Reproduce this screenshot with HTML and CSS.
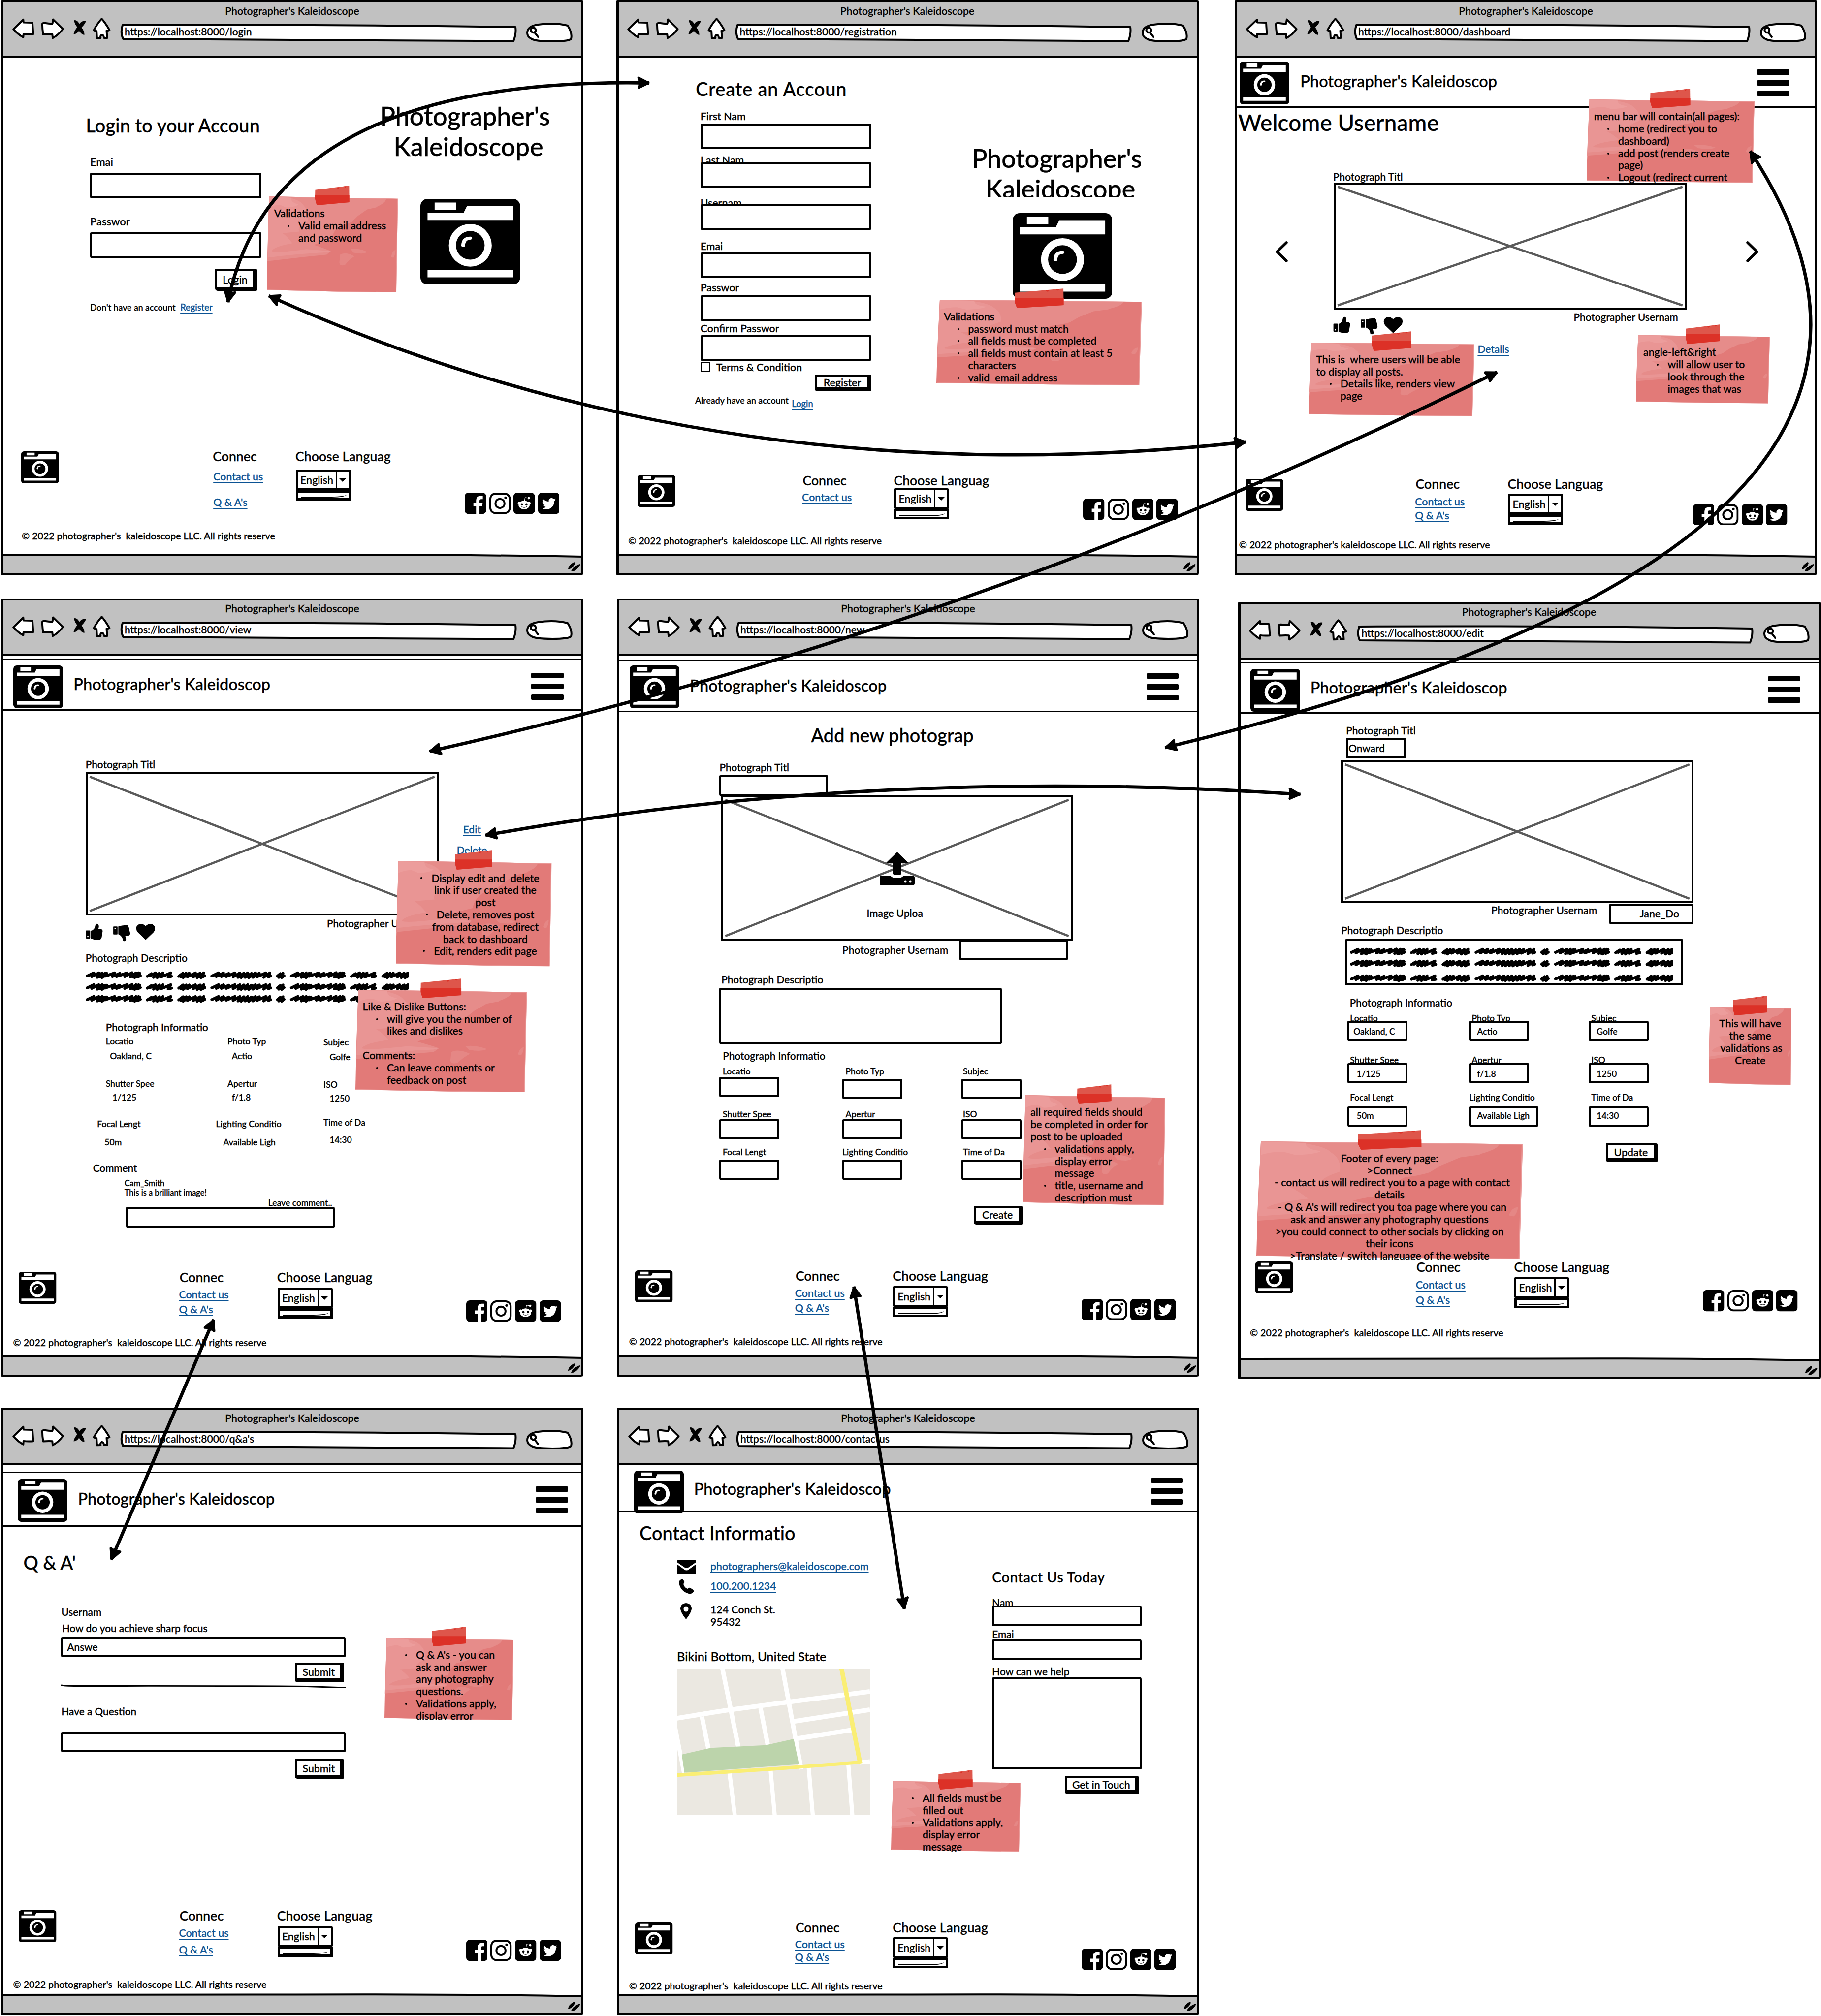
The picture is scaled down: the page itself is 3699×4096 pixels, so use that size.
FILE: index.html
```html
<!DOCTYPE html>
<html lang="en">
<head>
<meta charset="utf-8">
<title>Photographer's Kaleidoscope – wireframes</title>
<link rel="stylesheet" href="styles.css">
</head>
<body>
<svg class="defs" aria-hidden="true">
  <symbol id="nav-icons" viewBox="90 130 760 180">
    <g fill="#fff" stroke="#000" stroke-width="15" stroke-linejoin="round">
      <path d="M102 226L178 152L180 174L246 175Q250 178 250 200L254 263Q215 266 180 262L178 288Q140 268 102 226z"/>
      <path d="M324 184Q325 179 340 178Q380 184 402 183L407 151L482 224Q450 268 404 294L401 263Q360 262 330 264Q324 225 324 184z"/>
      <path d="M780 146Q805 172 840 232Q832 236 818 237L822 293H798Q796 268 780 270Q768 275 772 293L744 294L741 240Q728 238 720 233Q745 185 780 146z"/>
    </g>
    <path d="M569 157Q590 152 609 184Q630 158 658 163Q660 178 626 212Q650 245 648 269Q630 272 606 238Q588 264 565 264Q564 246 592 210Q568 180 569 157z"/>
  </symbol>
  <symbol id="url-bar" viewBox="0 0 808 38">
    <path d="M6 3Q400 1 804 7Q806 20 800 35.5Q400 33 7 31Q1 18 6 3z" fill="#fff" stroke="#000" stroke-width="4" stroke-linejoin="round"/>
  </symbol>
  <symbol id="search" viewBox="0 0 98 42">
    <path d="M4 22Q4 8 26 5Q60 0 86 7Q96 22 93 34Q88 39 55 39Q20 39 13 34Q4 30 4 22z" fill="#fff" stroke="#000" stroke-width="4"/>
    <path d="M12 19Q10 12 16 11Q22 12 21 18Q18 24 12 19zM19 21L26 30" fill="none" stroke="#000" stroke-width="4" stroke-linecap="round"/>
  </symbol>
  <symbol id="status" viewBox="0 0 1183 44" preserveAspectRatio="none">
    <path d="M0 3Q800 0 1183 6V44H0z" fill="#c1c1c1"/>
    <path d="M0 3Q350 4 600 2.5Q900 1 1183 6" fill="none" stroke="#000" stroke-width="4"/>
    <path d="M1152 31Q1153 23 1164 17Q1168 18 1163 25Q1158 31 1152 32zM1158 36Q1159 28 1175 21Q1179 21 1172 29Q1165 37 1158 36z" fill="#000"/>
  </symbol>
  <symbol id="camera" viewBox="913 150 590 658" preserveAspectRatio="none">
    <rect x="913" y="150" width="590" height="658" rx="42" ry="54"/>
    <path fill="#fff" d="M997 178h127v55H997zM955 259H1168L1189 205H1461V314H955zM955 698h506v55H955z"/>
    <ellipse cx="1208" cy="507" rx="127" ry="164" fill="#fff"/>
    <ellipse cx="1208" cy="507" rx="85" ry="110"/>
    <path d="M1166 508Q1168 452 1208 452" fill="none" stroke="#fff" stroke-width="23" stroke-linecap="round"/>
  </symbol>
  <symbol id="facebook" viewBox="30 67 165 165">
    <rect x="30" y="67" width="165" height="165" rx="28"/>
    <path fill="#fff" d="M118 232V169H97V145H118V128Q118 93 150 93H169V117H157Q144 117 144 130V145H168L165 169H144V232z"/>
  </symbol>
  <symbol id="instagram" viewBox="217 67 165 165">
    <rect x="224.500" y="74.500" width="150" height="150" rx="40" fill="#fff" stroke="#000" stroke-width="15"/>
    <circle cx="299" cy="150" r="35" fill="none" stroke="#000" stroke-width="15"/>
    <circle cx="342" cy="106" r="10"/>
  </symbol>
  <symbol id="reddit" viewBox="396 67 165 165">
    <rect x="396" y="67" width="165" height="165" rx="28"/>
    <g fill="#fff"><ellipse cx="478" cy="162" rx="43" ry="33"/><circle cx="440" cy="148" r="11"/><circle cx="517" cy="148" r="11"/><circle cx="514" cy="109" r="9"/></g>
    <path d="M480 134L485 104L508 108" fill="none" stroke="#fff" stroke-width="4"/>
    <circle cx="461" cy="158" r="9"/><circle cx="496" cy="158" r="9"/>
    <path d="M460 176Q478 186 497 176" fill="none" stroke="#000" stroke-width="5" stroke-linecap="round"/>
  </symbol>
  <symbol id="twitter" viewBox="588 67 165 165">
    <rect x="588" y="67" width="165" height="165" rx="28"/>
    <path transform="translate(617 98.500) scale(.21)" fill="#fff" d="M459.370 151.716c.325 4.548.325 9.097.325 13.645 0 138.720-105.583 298.558-298.558 298.558-59.452 0-114.680-17.219-161.137-47.106 8.447.974 16.568 1.299 25.340 1.299 49.055 0 94.213-16.568 130.274-44.832-46.132-.975-84.792-31.188-98.112-72.772 6.498.974 12.995 1.624 19.818 1.624 9.421 0 18.843-1.300 27.614-3.573-48.081-9.747-84.143-51.980-84.143-102.985v-1.299c13.969 7.797 30.214 12.670 47.431 13.319-28.264-18.843-46.781-51.005-46.781-87.391 0-19.492 5.197-37.360 14.294-52.954 51.655 63.675 129.300 105.258 216.365 109.807-1.624-7.797-2.599-15.918-2.599-24.040 0-57.828 46.782-104.934 104.934-104.934 30.213 0 57.502 12.670 76.670 33.137 23.715-4.548 46.456-13.320 66.599-25.340-7.798 24.366-24.366 44.833-46.132 57.827 21.117-2.273 41.584-8.122 60.426-16.243-14.292 20.791-32.161 39.308-52.628 54.253z"/>
  </symbol>
  <symbol id="reactions" viewBox="115 42 535 140">
    <path d="M121 97H146Q150 97 150 101V155Q150 159 146 159H121Q117 159 117 155V101Q117 97 121 97zM156 99Q186 92 190 54Q196 41 210 47Q221 58 212 87H236Q247 90 245 104L237 155Q232 171 205 170Q180 168 156 160z"/>
    <path d="M331 66H356Q360 66 360 70V124Q360 128 356 128H331Q327 128 327 124V70Q327 66 331 66zM366 66Q400 54 436 57Q444 60 446 72L456 118Q456 135 445 137H418Q429 163 424 174Q412 185 401 174Q400 142 366 126z"/>
    <circle cx="132" cy="144" r="5.500" fill="#fff"/><circle cx="342" cy="82" r="5.500" fill="#fff"/>
    <path d="M576 170L516 112Q498 92 506 66Q530 32 566 54L576 63L586 54Q622 32 646 66Q654 92 636 112z"/>
  </symbol>
  <symbol id="scribble" viewBox="115 408 2482 72">
    <g fill="none" stroke="#000" stroke-width="22" stroke-linecap="round" stroke-linejoin="round">
      <g id="scribble-words">
        <path d="M125 450L176 426L160 454L214 426L202 460L240 426L222 456L262 430L238 462L276 430L262 452L336 426L318 454L376 430L350 454L430 426L414 454L470 424L458 458L500 426L478 458L520 426L490 462L530 430L512 458L534 448"/>
        <path d="M588 452L620 432L606 450L650 426L636 460L680 428L664 462L708 426L692 458L768 426L748 458L774 452"/>
        <path d="M830 452L862 428L846 456L886 428L864 462L910 428L896 456L958 426L942 456L994 428L972 462L1022 426L1000 462L1030 448"/>
      </g>
      <path d="M1084 450L1136 426L1118 454L1174 426L1158 454L1214 430L1196 454L1262 426L1248 456L1300 426L1286 460L1330 428L1310 462L1360 426L1340 460L1390 430L1368 462L1420 426L1400 460L1450 428L1432 456L1500 426L1484 460L1530 426L1520 456L1536 450"/>
      <path d="M1590 450L1612 432L1600 460L1632 428L1622 462L1640 448"/>
      <use href="#scribble-words" x="1571"/>
    </g>
  </symbol>
  <symbol id="cross" viewBox="0 0 100 100" preserveAspectRatio="none">
    <path d="M.6 1.800L99.400 98.200M.6 98.200L99.400 1.800" stroke="#5a5a5a" stroke-width="4.500" vector-effect="non-scaling-stroke"/>
  </symbol>
  <symbol id="paper" viewBox="7 130 775 738" preserveAspectRatio="none">
    <path fill="#e27a78" d="M20 130L782 148L772 868L440 862L7 848L10 620z"/>
    <path fill="#e68c8a" d="M20 130L782 148L712 150Q710 178 660 208L655 214L600 230L545 280L510 325Q480 345 440 355Q395 400 390 460Q300 490 288 503Q350 530 385 550L360 578L230 595L9 628z"/>
    <path fill="#e99594" d="M20 130L120 135Q205 155 225 200Q255 240 250 320Q180 370 200 400L100 412Q130 440 158 490Q50 515 36 550Q60 568 240 535L385 550L360 560Q200 570 12 600z"/>
    <path fill="#ec9d9c" d="M20 132L150 140Q150 180 195 190Q180 212 120 215L85 195Q50 195 20 215z"/>
    <path fill="#e58785" d="M440 578Q470 552 525 590Q490 620 470 655Q440 670 436 640zM503 535Q550 525 602 556Q580 578 520 562zM742 590Q750 545 768 542Q766 580 756 600Q742 600 742 590z"/>
    <path fill="none" stroke="#ea9c9b" stroke-width="3" d="M20 132L780 149L771 866L440 860L9 846"/>
  </symbol>
  <symbol id="tape" viewBox="290 44 204 154" preserveAspectRatio="none">
    <path fill="#de564b" d="M291 78L492 45L493 175L300 198L290 140z"/>
    <path fill="#dc3127" d="M290 118H493V175L300 198L290 150zM418 59L434 57Q432 70 424 69zM460 51L474 49Q474 60 467 60z"/>
  </symbol>
</svg>

<main class="board">

<!-- Login -->
<section class="window login">
  <header class="chrome"><h2 class="chrome-title">Photographer's Kaleidoscope</h2>
    <div class="toolbar"><svg class="nav-icons"><use href="#nav-icons"/></svg><div class="url"><svg><use href="#url-bar"/></svg><span>https://localhost:8000/login</span></div><svg class="search"><use href="#search"/></svg></div></header>
  <div class="page page-split">
    <form class="form">
      <h1 class="heading">Login to your Accoun</h1>
      <label class="label">Emai</label><div class="input"></div>
      <label class="label">Passwor</label><div class="input"></div>
      <div class="button">Login</div>
      <p class="hint">Don't have an account <a class="link">Register</a></p>
    </form>
    <div class="brand"><div class="brand-name"><span>Photographer's</span><span>Kaleidoscope</span></div><svg class="camera-lg"><use href="#camera"/></svg></div>
  </div>
  <footer class="footer"><svg class="camera-sm"><use href="#camera"/></svg>
    <div class="connect"><h3>Connec</h3><a class="link">Contact us</a><a class="link">Q &amp; A's</a></div>
    <div class="language"><h3>Choose Languag</h3><div class="select"><span>English</span><i></i></div><div class="select-list"></div></div>
    <div class="social"><svg><use href="#facebook"/></svg><svg><use href="#instagram"/></svg><svg><use href="#reddit"/></svg><svg><use href="#twitter"/></svg></div></footer>
  <p class="copyright">© 2022 photographer's&nbsp; kaleidoscope LLC. All rights reserve</p>
  <svg class="status"><use href="#status"/></svg>
  <aside class="note"><svg class="paper"><use href="#paper"/></svg><svg class="tape"><use href="#tape"/></svg>
    <div class="note-text"><p>Validations</p><ul><li>Valid email address<br>and password</li></ul></div></aside>
</section>

<!-- Registration -->
<section class="window registration">
  <header class="chrome"><h2 class="chrome-title">Photographer's Kaleidoscope</h2>
    <div class="toolbar"><svg class="nav-icons"><use href="#nav-icons"/></svg><div class="url"><svg><use href="#url-bar"/></svg><span>https://localhost:8000/registration</span></div><svg class="search"><use href="#search"/></svg></div></header>
  <div class="page page-split">
    <form class="form">
      <h1 class="heading">Create an Accoun</h1>
      <label class="label">First Nam</label><div class="input"></div>
      <label class="label">Last Nam</label><div class="input"></div>
      <label class="label">Usernam</label><div class="input"></div>
      <label class="label">Emai</label><div class="input"></div>
      <label class="label">Passwor</label><div class="input"></div>
      <label class="label">Confirm Passwor</label><div class="input"></div>
      <div class="check"><i></i>Terms &amp; Condition</div>
      <div class="button">Register</div>
      <p class="hint">Already have an account <a class="link">Login</a></p>
    </form>
    <div class="brand"><div class="brand-name"><span>Photographer's</span><span>Kaleidoscope</span></div><svg class="camera-lg"><use href="#camera"/></svg></div>
  </div>
  <footer class="footer"><svg class="camera-sm"><use href="#camera"/></svg>
    <div class="connect"><h3>Connec</h3><a class="link">Contact us</a></div>
    <div class="language"><h3>Choose Languag</h3><div class="select"><span>English</span><i></i></div><div class="select-list"></div></div>
    <div class="social"><svg><use href="#facebook"/></svg><svg><use href="#instagram"/></svg><svg><use href="#reddit"/></svg><svg><use href="#twitter"/></svg></div></footer>
  <p class="copyright">© 2022 photographer's&nbsp; kaleidoscope LLC. All rights reserve</p>
  <svg class="status"><use href="#status"/></svg>
  <aside class="note"><svg class="paper"><use href="#paper"/></svg><svg class="tape"><use href="#tape"/></svg>
    <div class="note-text"><p>Validations</p><ul><li>password must match</li><li>all fields must be completed</li><li>all fields must contain at least 5<br>characters</li><li>valid&nbsp; email address</li></ul></div></aside>
</section>

<!-- Dashboard -->
<section class="window dashboard">
  <header class="chrome"><h2 class="chrome-title">Photographer's Kaleidoscope</h2>
    <div class="toolbar"><svg class="nav-icons"><use href="#nav-icons"/></svg><div class="url"><svg><use href="#url-bar"/></svg><span>https://localhost:8000/dashboard</span></div><svg class="search"><use href="#search"/></svg></div></header>
  <nav class="nav"><svg class="camera-md"><use href="#camera"/></svg><span>Photographer's Kaleidoscop</span><div class="burger"><i></i><i></i><i></i></div></nav>
  <div class="page">
    <h1 class="welcome">Welcome Username</h1>
    <label class="label">Photograph Titl</label>
    <div class="carousel">
      <svg class="chevron" viewBox="0 0 26 43"><path d="M23 3L4 21.500L23 40"/></svg>
      <div class="picture"><svg><use href="#cross"/></svg></div>
      <svg class="chevron" viewBox="0 0 26 43"><path d="M3 3L22 21.500L3 40"/></svg>
    </div>
    <div class="meta"><svg class="reactions"><use href="#reactions"/></svg><span class="label">Photographer Usernam</span></div>
    <a class="link details">Details</a>
  </div>
  <footer class="footer"><svg class="camera-sm"><use href="#camera"/></svg>
    <div class="connect"><h3>Connec</h3><a class="link">Contact us</a><a class="link">Q &amp; A's</a></div>
    <div class="language"><h3>Choose Languag</h3><div class="select"><span>English</span><i></i></div><div class="select-list"></div></div>
    <div class="social"><svg><use href="#facebook"/></svg><svg><use href="#instagram"/></svg><svg><use href="#reddit"/></svg><svg><use href="#twitter"/></svg></div></footer>
  <p class="copyright">© 2022 photographer's kaleidoscope LLC. All rights reserve</p>
  <svg class="status"><use href="#status"/></svg>
  <aside class="note note-menu"><svg class="paper"><use href="#paper"/></svg><svg class="tape"><use href="#tape"/></svg>
    <div class="note-text"><p>menu bar will contain(all pages):</p><ul><li>home (redirect you to<br>dashboard)</li><li>add post (renders create<br>page)</li><li>Logout (redirect current</li></ul></div></aside>
  <aside class="note note-posts"><svg class="paper"><use href="#paper"/></svg><svg class="tape"><use href="#tape"/></svg>
    <div class="note-text"><p>This is&nbsp; where users will be able<br>to display all posts.</p><ul><li>Details like, renders view<br>page</li></ul></div></aside>
  <aside class="note note-angle"><svg class="paper"><use href="#paper"/></svg><svg class="tape"><use href="#tape"/></svg>
    <div class="note-text"><p>angle-left&amp;right</p><ul><li>will allow user to<br>look through the<br>images that was</li></ul></div></aside>
</section>

<!-- View -->
<section class="window view">
  <header class="chrome"><h2 class="chrome-title">Photographer's Kaleidoscope</h2>
    <div class="toolbar"><svg class="nav-icons"><use href="#nav-icons"/></svg><div class="url"><svg><use href="#url-bar"/></svg><span>https://localhost:8000/view</span></div><svg class="search"><use href="#search"/></svg></div></header>
  <nav class="nav"><svg class="camera-md"><use href="#camera"/></svg><span>Photographer's Kaleidoscop</span><div class="burger"><i></i><i></i><i></i></div></nav>
  <div class="page">
    <label class="label">Photograph Titl</label>
    <div class="picture-row"><div class="picture"><svg><use href="#cross"/></svg></div><div class="actions"><a class="link">Edit</a><a class="link">Delete</a></div></div>
    <div class="meta"><svg class="reactions"><use href="#reactions"/></svg><span class="label">Photographer Usernam</span></div>
    <div class="label">Photograph Descriptio</div>
    <div class="scribbles"><svg><use href="#scribble"/></svg><svg><use href="#scribble"/></svg><svg><use href="#scribble"/></svg></div>
    <div class="label info-title">Photograph Informatio</div>
    <div class="info">
      <b>Locatio</b><b>Photo Typ</b><b>Subjec</b>
      <span>Oakland, C</span><span>Actio</span><span>Golfe</span>
      <b>Shutter Spee</b><b>Apertur</b><b>ISO</b>
      <span>1/125</span><span>f/1.8</span><span>1250</span>
      <b>Focal Lengt</b><b>Lighting Conditio</b><b>Time of Da</b>
      <span>50m</span><span>Available Ligh</span><span>14:30</span>
    </div>
    <div class="label comments-title">Comment</div>
    <p class="comment">Cam_Smith<br>This is a brilliant image!</p>
    <p class="comment leave">Leave comment..</p>
    <div class="input"></div>
  </div>
  <footer class="footer"><svg class="camera-sm"><use href="#camera"/></svg>
    <div class="connect"><h3>Connec</h3><a class="link">Contact us</a><a class="link">Q &amp; A's</a></div>
    <div class="language"><h3>Choose Languag</h3><div class="select"><span>English</span><i></i></div><div class="select-list"></div></div>
    <div class="social"><svg><use href="#facebook"/></svg><svg><use href="#instagram"/></svg><svg><use href="#reddit"/></svg><svg><use href="#twitter"/></svg></div></footer>
  <p class="copyright">© 2022 photographer's&nbsp; kaleidoscope LLC. All rights reserve</p>
  <svg class="status"><use href="#status"/></svg>
  <aside class="note note-links"><svg class="paper"><use href="#paper"/></svg><svg class="tape"><use href="#tape"/></svg>
    <div class="note-text"><ul class="centered"><li><span>Display edit and&nbsp; delete</span><br>link if user created the<br>post</li><li><span>Delete, removes post</span><br>from database, redirect<br>back to dashboard</li><li><span>Edit, renders edit page</span></li></ul></div></aside>
  <aside class="note note-likes"><svg class="paper"><use href="#paper"/></svg><svg class="tape"><use href="#tape"/></svg>
    <div class="note-text"><p>Like &amp; Dislike Buttons:</p><ul><li>will give you the number of<br>likes and dislikes</li></ul><p>&nbsp;</p><p>Comments:</p><ul><li>Can leave comments or<br>feedback on post</li></ul></div></aside>
</section>

<!-- New -->
<section class="window new">
  <header class="chrome"><h2 class="chrome-title">Photographer's Kaleidoscope</h2>
    <div class="toolbar"><svg class="nav-icons"><use href="#nav-icons"/></svg><div class="url"><svg><use href="#url-bar"/></svg><span>https://localhost:8000/new</span></div><svg class="search"><use href="#search"/></svg></div></header>
  <nav class="nav"><svg class="camera-md"><use href="#camera"/></svg><span>Photographer's Kaleidoscop</span><div class="burger"><i></i><i></i><i></i></div></nav>
  <div class="page">
    <h1 class="heading">Add new photograp</h1>
    <label class="label">Photograph Titl</label>
    <div class="input title-input"></div>
    <div class="picture"><svg><use href="#cross"/></svg>
      <div class="upload"><svg class="upload-icon" viewBox="0 0 71 68"><path d="M35.500 0L58 22Q52 24 44 23V44Q44 47 35 47Q27 47 27 44V23Q19 24 13 22zM5 48H22Q24 53 35 53Q46 53 48 48H66Q71 48 71 52V64Q71 68 66 68H5Q0 68 0 64V52Q0 48 5 48z"/><circle cx="52" cy="60" r="2.500" fill="#fff"/><circle cx="62" cy="60" r="2.500" fill="#fff"/></svg><span class="label">Image Uploa</span></div></div>
    <div class="user-row"><span class="label">Photographer Usernam</span><div class="input"></div></div>
    <div class="label description-label">Photograph Descriptio</div>
    <div class="input textarea"></div>
    <div class="label info-title">Photograph Informatio</div>
    <div class="info">
      <b>Locatio</b><b>Photo Typ</b><b>Subjec</b>
      <div class="input"></div><div class="input"></div><div class="input"></div>
      <b>Shutter Spee</b><b>Apertur</b><b>ISO</b>
      <div class="input"></div><div class="input"></div><div class="input"></div>
      <b>Focal Lengt</b><b>Lighting Conditio</b><b>Time of Da</b>
      <div class="input"></div><div class="input"></div><div class="input"></div>
    </div>
    <div class="button">Create</div>
  </div>
  <footer class="footer"><svg class="camera-sm"><use href="#camera"/></svg>
    <div class="connect"><h3>Connec</h3><a class="link">Contact us</a><a class="link">Q &amp; A's</a></div>
    <div class="language"><h3>Choose Languag</h3><div class="select"><span>English</span><i></i></div><div class="select-list"></div></div>
    <div class="social"><svg><use href="#facebook"/></svg><svg><use href="#instagram"/></svg><svg><use href="#reddit"/></svg><svg><use href="#twitter"/></svg></div></footer>
  <p class="copyright">© 2022 photographer's&nbsp; kaleidoscope LLC. All rights reserve</p>
  <svg class="status"><use href="#status"/></svg>
  <aside class="note"><svg class="paper"><use href="#paper"/></svg><svg class="tape"><use href="#tape"/></svg>
    <div class="note-text"><p>all required fields should<br>be completed in order for<br>post to be uploaded</p><ul><li>validations apply,<br>display error<br>message</li><li>title, username and<br>description must</li></ul></div></aside>
</section>

<!-- Edit -->
<section class="window edit">
  <header class="chrome"><h2 class="chrome-title">Photographer's Kaleidoscope</h2>
    <div class="toolbar"><svg class="nav-icons"><use href="#nav-icons"/></svg><div class="url"><svg><use href="#url-bar"/></svg><span>https://localhost:8000/edit</span></div><svg class="search"><use href="#search"/></svg></div></header>
  <nav class="nav"><svg class="camera-md"><use href="#camera"/></svg><span>Photographer's Kaleidoscop</span><div class="burger"><i></i><i></i><i></i></div></nav>
  <div class="page">
    <label class="label title-label">Photograph Titl</label>
    <div class="input title-input">Onward</div>
    <div class="picture"><svg><use href="#cross"/></svg></div>
    <div class="user-row"><span class="label">Photographer Usernam</span><div class="input">Jane_Do</div></div>
    <div class="label">Photograph Descriptio</div>
    <div class="input description"><svg><use href="#scribble"/></svg><svg><use href="#scribble"/></svg><svg><use href="#scribble"/></svg></div>
    <div class="label info-title">Photograph Informatio</div>
    <div class="info">
      <b>Locatio</b><b>Photo Typ</b><b>Subjec</b>
      <div class="input">Oakland, C</div><div class="input">Actio</div><div class="input">Golfe</div>
      <b>Shutter Spee</b><b>Apertur</b><b>ISO</b>
      <div class="input">1/125</div><div class="input">f/1.8</div><div class="input">1250</div>
      <b>Focal Lengt</b><b>Lighting Conditio</b><b>Time of Da</b>
      <div class="input">50m</div><div class="input">Available Ligh</div><div class="input">14:30</div>
    </div>
    <div class="button">Update</div>
  </div>
  <footer class="footer"><svg class="camera-sm"><use href="#camera"/></svg>
    <div class="connect"><h3>Connec</h3><a class="link">Contact us</a><a class="link">Q &amp; A's</a></div>
    <div class="language"><h3>Choose Languag</h3><div class="select"><span>English</span><i></i></div><div class="select-list"></div></div>
    <div class="social"><svg><use href="#facebook"/></svg><svg><use href="#instagram"/></svg><svg><use href="#reddit"/></svg><svg><use href="#twitter"/></svg></div></footer>
  <p class="copyright">© 2022 photographer's&nbsp; kaleidoscope LLC. All rights reserve</p>
  <svg class="status"><use href="#status"/></svg>
  <aside class="note note-same"><svg class="paper"><use href="#paper"/></svg><svg class="tape"><use href="#tape"/></svg>
    <div class="note-text"><p>This will have<br>the same<br>&nbsp;validations as<br>Create</p></div></aside>
  <aside class="note note-footer"><svg class="paper"><use href="#paper"/></svg><svg class="tape"><use href="#tape"/></svg>
    <div class="note-text"><p>Footer of every page:<br>&gt;Connect<br>&nbsp; - contact us will redirect you to a page with contact<br>details<br>&nbsp; - Q &amp; A's will redirect you toa page where you can<br>ask and answer any photography questions<br>&gt;you could connect to other socials by clicking on<br>their icons<br>&gt;Translate / switch language of the website</p></div></aside>
</section>

<!-- Q & A -->
<section class="window qa">
  <header class="chrome"><h2 class="chrome-title">Photographer's Kaleidoscope</h2>
    <div class="toolbar"><svg class="nav-icons"><use href="#nav-icons"/></svg><div class="url"><svg><use href="#url-bar"/></svg><span>https://localhost:8000/q&amp;a's</span></div><svg class="search"><use href="#search"/></svg></div></header>
  <nav class="nav"><svg class="camera-md"><use href="#camera"/></svg><span>Photographer's Kaleidoscop</span><div class="burger"><i></i><i></i><i></i></div></nav>
  <div class="page">
    <h1 class="heading">Q &amp; A'</h1>
    <div class="label">Usernam</div>
    <div class="label question">How do you achieve sharp focus</div>
    <div class="input">Answe</div>
    <div class="button">Submit</div>
    <svg class="rule" viewBox="0 0 580 8"><path d="M0 2Q10 4 60 3.500Q300 3 500 4.500L578 7"/></svg>
    <div class="label">Have a Question</div>
    <div class="input"></div>
    <div class="button">Submit</div>
  </div>
  <footer class="footer"><svg class="camera-sm"><use href="#camera"/></svg>
    <div class="connect"><h3>Connec</h3><a class="link">Contact us</a><a class="link">Q &amp; A's</a></div>
    <div class="language"><h3>Choose Languag</h3><div class="select"><span>English</span><i></i></div><div class="select-list"></div></div>
    <div class="social"><svg><use href="#facebook"/></svg><svg><use href="#instagram"/></svg><svg><use href="#reddit"/></svg><svg><use href="#twitter"/></svg></div></footer>
  <p class="copyright">© 2022 photographer's&nbsp; kaleidoscope LLC. All rights reserve</p>
  <svg class="status"><use href="#status"/></svg>
  <aside class="note"><svg class="paper"><use href="#paper"/></svg><svg class="tape"><use href="#tape"/></svg>
    <div class="note-text"><ul><li>Q &amp; A's - you can<br>ask and answer<br>any photography<br>questions.</li><li>Validations apply,<br>display error</li></ul></div></aside>
</section>

<!-- Contact -->
<section class="window contact">
  <header class="chrome"><h2 class="chrome-title">Photographer's Kaleidoscope</h2>
    <div class="toolbar"><svg class="nav-icons"><use href="#nav-icons"/></svg><div class="url"><svg><use href="#url-bar"/></svg><span>https://localhost:8000/contactus</span></div><svg class="search"><use href="#search"/></svg></div></header>
  <nav class="nav"><svg class="camera-md"><use href="#camera"/></svg><span>Photographer's Kaleidoscop</span><div class="burger"><i></i><i></i><i></i></div></nav>
  <div class="page page-split">
    <div class="contact-info">
      <h1 class="heading">Contact Informatio</h1>
      <div class="contact-row"><svg viewBox="0 0 39 40"><path d="M4 1H35Q39 1 39 6L23 17Q19.500 19 16 17L0 6Q0 1 4 1zM0 10L15 21Q19.500 24 24 21L39 10V26Q39 30 35 30H4Q0 30 0 26z"/></svg><a class="link">photographers@kaleidoscope.com</a></div>
      <div class="contact-row"><svg viewBox="0 0 39 40"><path d="M9 1Q4 2 4.500 9Q7 25 24 30Q31 31 34 26Q35 24 33 22L27 18Q25 17 22 20Q15 18 13 10Q16 8 15 5L12 1Q11 0 9 1z"/></svg><a class="link">100.200.1234</a></div>
      <div class="contact-row"><svg viewBox="0 0 39 40"><path fill-rule="evenodd" d="M18.500 0Q30 1 30 12Q29 20 18.500 33Q8 20 7 12Q7 1 18.500 0zM18.500 6.500A5 5.500 0 1 0 18.500 17.500A5 5.500 0 1 0 18.500 6.500z"/></svg><span>124 Conch St.<br>95432</span></div>
      <div class="city">Bikini Bottom, United State</div>
      <svg class="map" viewBox="171 676 517 377" preserveAspectRatio="none">
        <path fill="#ebe8e1" d="M171 676h517v377H171z"/>
        <g fill="none" stroke="#fff" stroke-width="12">
          <path d="M171 804Q290 785 315 782L470 762L688 735"/>
          <path d="M293 676L336 880M454 676L504 935M238 800L256 885M395 778L415 875M484 812L688 782M494 856L645 833"/>
          <path d="M165 820L190 945M312 945L326 1053M422 938L433 1053M524 930L535 1053M630 920L641 1053M660 918L688 915" stroke-width="11"/>
        </g>
        <path fill="#bcd4ab" d="M184 897L262 880L409 873L484 857L498 922L191 944z"/>
        <path fill="none" stroke="#faee74" stroke-width="9" d="M171 950L430 934L662 917"/>
        <path fill="none" stroke="#faee74" stroke-width="12" d="M612 676L662 920"/>
      </svg>
    </div>
    <form class="form">
      <h2 class="subheading">Contact Us Today</h2>
      <label class="label">Nam</label><div class="input"></div>
      <label class="label">Emai</label><div class="input"></div>
      <label class="label">How can we help</label><div class="input textarea"></div>
      <div class="button">Get in Touch</div>
    </form>
  </div>
  <footer class="footer"><svg class="camera-sm"><use href="#camera"/></svg>
    <div class="connect"><h3>Connec</h3><a class="link">Contact us</a><a class="link">Q &amp; A's</a></div>
    <div class="language"><h3>Choose Languag</h3><div class="select"><span>English</span><i></i></div><div class="select-list"></div></div>
    <div class="social"><svg><use href="#facebook"/></svg><svg><use href="#instagram"/></svg><svg><use href="#reddit"/></svg><svg><use href="#twitter"/></svg></div></footer>
  <p class="copyright">© 2022 photographer's&nbsp; kaleidoscope LLC. All rights reserve</p>
  <svg class="status"><use href="#status"/></svg>
  <aside class="note"><svg class="paper"><use href="#paper"/></svg><svg class="tape"><use href="#tape"/></svg>
    <div class="note-text"><ul><li>All fields must be<br>filled out</li><li>Validations apply,<br>display error<br>message</li></ul></div></aside>
</section>

<!-- Links between the pages -->
<svg class="arrows" viewBox="0 0 3699 4096">
  <defs><marker id="head" markerUnits="userSpaceOnUse" markerWidth="40" markerHeight="40" viewBox="-30 -20 40 40" orient="auto-start-reverse"><path d="M-2 0L-21 10Q-18 0 -22 -10z" stroke="#000" stroke-width="5" stroke-linejoin="round"/></marker></defs>
  <g class="arrow-lines">
    <path d="M1319 168.500Q555 155 463 614"/>
    <path d="M546 601Q1460 1016 2531 898"/>
    <path d="M3041 756Q1997 1275 872.500 1526.500"/>
    <path d="M3555 307Q4080 1105 2366.500 1519"/>
    <path d="M986 1697Q1776 1556 2641.500 1614"/>
    <path d="M434 2681L226 3169"/>
    <path d="M1734.500 2614L1837 3269"/>
  </g>
</svg>
</main>
</body>
</html>
```
FILE: styles.css
```css
* { box-sizing: border-box; }
html, body { margin: 0; background: #fff; }
body { font-family: Lato, "Liberation Sans", sans-serif; font-weight: 500; color: #000; -webkit-text-stroke: .35px; }
h1, h2, h3, p, ul { margin: 0; padding: 0; font-weight: inherit; }
b { font-weight: inherit; }
svg { display: block; }
.defs { position: absolute; width: 0; height: 0; }

.board { position: relative; width: 3699px; height: 4096px; overflow: hidden; white-space: nowrap; }

/* Browser windows on the canvas */
.window { position: absolute; width: 1183px; display: flex; flex-direction: column; background: #fff; }
.window::after { content: ""; position: absolute; inset: 0; border: solid #000; border-width: 4px 4px 4px 5px; border-radius: 2px 3px 5px 2px; pointer-events: none; }
.login { left: 2px; top: 1px; height: 1168px; }
.registration { left: 1251.5px; top: 1px; height: 1168px; }
.dashboard { left: 2508px; top: 1px; height: 1168px; }
.view { left: 2px; top: 1215.5px; height: 1581px; }
.new { left: 1253px; top: 1215.5px; height: 1581px; }
.edit { left: 2514.5px; top: 1222.5px; height: 1579px; }
.qa { left: 2px; top: 2860px; height: 1234px; }
.contact { left: 1253px; top: 2860px; height: 1234px; }

.chrome { flex: none; height: 117px; background: #c1c1c1; border-bottom: 4px solid #000; padding-top: 6.5px; }
.chrome-title { font-size: 21.3px; line-height: 28.4px; margin-bottom: -1.5px; text-align: center; }
.toolbar { display: flex; align-items: flex-start; padding-left: 21.8px; }
.nav-icons { width: 201px; height: 47.6px; }
.url { position: relative; width: 808px; height: 38px; margin: 13.6px 0 0 18.2px; }
.url svg { position: absolute; inset: 0; width: 808px; height: 38px; }
.url span { position: relative; display: block; padding-left: 10px; font-size: 21.05px; line-height: 32px; }
.search { width: 98px; height: 42px; margin: 10.5px 0 0 16.5px; }

.nav { flex: none; display: flex; align-items: flex-start; border: solid #000; border-width: 3.5px 0; height: var(--nav-height); margin-top: var(--nav-gap); }
.nav span { font-size: 32.6px; line-height: 43.5px; margin: var(--nav-title-y) 0 0 38.5px; }
.camera-md { width: 101px; height: 87px; margin: var(--nav-logo-y) 0 0 var(--nav-logo-x); }
.burger { width: 65.5px; display: flex; flex-direction: column; gap: 11px; margin: var(--burger-y) var(--burger-right) 0 auto; }
.burger i { height: 10.8px; background: #000; border-radius: 2px; }
.dashboard { --nav-gap: -4px; --nav-height: 105px; --nav-logo-x: 9.5px; --nav-logo-y: 7.5px; --nav-title-y: 26px; --burger-y: 24px; --burger-right: 56.5px; }
.dashboard .nav span { margin-left: 22.8px; }
.view { --nav-gap: 5.3px; --nav-height: 106.3px; --nav-logo-x: 25.3px; --nav-logo-y: 11.5px; --nav-title-y: 27.5px; --burger-y: 26.7px; --burger-right: 40.5px; }
.view .nav span, .new .nav span, .edit .nav span { margin-left: 21px; }
.new { --nav-gap: 7.3px; --nav-height: 107.3px; --nav-logo-x: 26.3px; --nav-logo-y: 9.5px; --nav-title-y: 28.5px; --burger-y: 25.7px; --burger-right: 42px; }
.edit { --nav-gap: 5px; --nav-height: 105.9px; --nav-logo-x: 25.2px; --nav-logo-y: 11px; --nav-title-y: 27px; --burger-y: 26px; --burger-right: 41px; }
.qa { --nav-gap: 13.3px; --nav-height: 111.4px; --nav-logo-x: 34.4px; --nav-logo-y: 11.7px; --nav-title-y: 29.5px; --burger-y: 26.7px; --burger-right: 31.5px; }
.qa .nav span, .contact .nav span { margin-left: 21px; }
.contact { --nav-gap: -4px; --nav-height: 100.2px; --nav-logo-x: 34.7px; --nav-logo-y: 11.6px; --nav-title-y: 26.5px; --burger-y: 26.6px; --burger-right: 33px; }

.page { flex: none; display: grid; align-items: start; align-content: start; justify-items: start; }
.page-split { display: flex; align-items: flex-start; }
.form { display: grid; align-items: start; justify-items: start; }

/* Widgets */
.heading { font-size: 37.8px; line-height: 48px; }
.welcome { font-size: 45.7px; line-height: 59px; }
.subheading { font-size: 28.5px; line-height: 34px; letter-spacing: .6px; }
.label { font-size: 20.8px; line-height: 26.5px; }
.hint { font-size: 17.7px; line-height: 24px; }
.link { color: #0b5394; text-decoration: underline; text-decoration-thickness: 2px; text-underline-offset: 3.5px; text-decoration-skip-ink: none; }
.input { background: #fff; border: solid #000; border-width: 4px 4px 4.5px; border-radius: 3px 2px 4px 2px / 2px 5px 2px 4px; width: 347.5px; height: 52px; }
.button { background: #fff; border: 4px solid #000; border-right-width: 8px; border-bottom-width: 8px; border-radius: 1px 3px 2px 5px; font-size: 21.3px; text-align: center; }
.picture { position: relative; width: 717px; height: 291px; background: #fff; border: 4px solid #000; }
.picture > svg { position: absolute; inset: 0; width: 100%; height: 100%; }
.reactions { width: 141.5px; height: 37px; }
.meta, .picture-row, .carousel, .user-row { display: flex; align-items: flex-start; }
.camera-lg { width: 202.5px; height: 174px; }
.brand { display: flex; flex-direction: column; align-items: center; width: 380px; }
.brand-name { font-size: 51.8px; line-height: 62px; text-align: center; overflow: hidden; }
.brand-name span { display: block; padding-right: 9px; }
.brand-name span + span { padding: 0 0 0 5px; }
.brand .camera-lg { margin-left: 13px; }

/* Footer */
.footer { flex: none; display: grid; grid-template-columns: var(--cols) 1fr; align-items: start; height: var(--footer-height); padding-left: var(--footer-x); }
.camera-sm { width: 76.5px; height: 65px; margin-top: 6.5px; }
.footer h3 { font-size: 26.7px; line-height: 35px; margin: 0 0 -3px -1px; }
.connect { display: flex; flex-direction: column; align-items: flex-start; }
.connect .link { font-size: 21.4px; line-height: 26px; margin: calc(var(--link-gap) + 1.5px) 0 0 -2.3px; }
.connect .link + .link { margin-top: var(--link2-gap); }
.select { display: flex; width: 112px; height: 42px; border: 4px solid #000; border-radius: 2px 4px 2px 2px; margin: var(--select-gap) 0 0 0; font-size: 21.5px; line-height: 35px; }
.select span { width: 80px; padding-left: 5px; border-right: 3.5px solid #000; margin-right: 3.5px; }
.select i { width: 0; height: 0; border: 7px solid transparent; border-top-color: #000; border-bottom: 0; margin-top: 14px; margin-left: 1px; }
.select-list { width: 112px; height: 21px; border: 5px solid #000; margin: 0; }
.select-list::before { content: ""; display: block; margin: 2px 4px 0 5px; height: 6px; border-bottom: 2.5px solid #000; border-radius: 0 0 30px 0 / 0 0 6px 0; }
.social { display: flex; gap: 6.1px; margin-top: var(--social-y); }
.social svg { width: 43.5px; height: 43.5px; }
.copyright { font-size: 19.6px; line-height: 27px; margin-left: var(--copy-x); }
.status { flex: none; width: 1183px; height: 44px; margin-top: auto; }

.login { --footer-x: 40.5px; --cols: 390.7px 167.8px 343px; --link-gap: 11px; --link2-gap: 26.5px; --select-gap: 12.3px; --social-y: 91.3px; --footer-height: 165.2px; --copy-x: 42px; }
.login .connect .link { margin-left: 0; }
.registration { --footer-x: 43px; --cols: 336.9px 185px 384px; --link-gap: 5px; --link2-gap: 0px; --select-gap: 1.3px; --social-y: 54px; --footer-height: 126.5px; --copy-x: 24.8px; }
.dashboard { --footer-x: 21.7px; --cols: 346.9px 186.9px 375.2px; --link-gap: 6px; --link2-gap: 2.4px; --select-gap: 4.7px; --social-y: 57.7px; --footer-height: 126.5px; --copy-x: 8.7px; }
.view { --footer-x: 36px; --cols: 327.7px 198px 383.2px; --link-gap: 5.6px; --link2-gap: 4.4px; --select-gap: 6.3px; --social-y: 64px; --footer-height: 136.7px; --copy-x: 24.5px; }
.new { --footer-x: 37px; --cols: 327px 197.2px 382.4px; --link-gap: 5.5px; --link2-gap: 4.5px; --select-gap: 6.5px; --social-y: 63.9px; --footer-height: 137.7px; --copy-x: 24.8px; }
.edit { --footer-x: 35.9px; --cols: 327.7px 198.4px 382.9px; --link-gap: 6.5px; --link2-gap: 5.5px; --select-gap: 6.5px; --social-y: 64.8px; --footer-height: 137.7px; --copy-x: 24.4px; }
.qa { --footer-x: 36px; --cols: 327.7px 198px 383.2px; --link-gap: 5.5px; --link2-gap: 8px; --select-gap: 6.3px; --social-y: 66.7px; --footer-height: 143.7px; --copy-x: 24.5px; }
.contact { --footer-x: 37px; --cols: 327px 197.2px 382.4px; --link-gap: 3.8px; --link2-gap: .9px; --select-gap: 4.5px; --social-y: 59.5px; --footer-height: 122px; --copy-x: 24.8px; }

/* Login */
.login .page { height: 792.2px; }
.login .form { width: 575px; padding: 112.7px 0 0 181px; grid-template-rows: 85.7px 34.6px 85.9px 35.5px 73.3px 66.8px auto; }
.login .heading { margin-left: -8.5px; letter-spacing: .15px; }
.login .label { font-size: 22px; }
.login .button { width: 85px; height: 45px; line-height: 36px; margin-left: 254px; }
.login .hint .link, .registration .hint .link { font-size: 18.3px; margin-left: 5px; }
.login .brand { padding-top: 86px; margin-left: 182px; }
.login .brand-name { margin-bottom: 76px; }

/* Registration */
.registration .page { height: 840.9px; }
.registration .form { width: 575px; padding: 39.3px 0 0 171.2px; grid-template-rows: 65.7px 27.8px 61.3px 18px 68.6px 16.8px 71.8px 26.2px 57.8px 28.5px 53.8px 27.1px 53.5px 27.3px 39.9px auto; }
.registration .heading { margin-left: -9.5px; letter-spacing: .9px; }
.registration .label { font-size: 21.4px; }
.check { display: flex; gap: 13px; font-size: 21.3px; line-height: 25px; }
.check i { width: 19px; height: 20px; border: 2.5px solid #000; margin-top: 2px; }
.registration .button { width: 115px; height: 34px; line-height: 24px; margin-left: 232.8px; }
.registration .hint { margin-left: -10.6px; }
.registration .hint .link { position: relative; top: 7px; margin-left: 2px; }
.registration .brand { padding-top: 172px; margin-left: 135px; }
.registration .brand-name { height: 110px; margin-bottom: 32.7px; }

/* Dashboard */
.dashboard .page { height: 747.3px; grid-template-rows: 127px 25px 260.3px 65.1px auto; }
.dashboard .welcome { margin-left: 7px; letter-spacing: .2px; }
.dashboard .page > .label { margin-left: 200px; }
.carousel .picture { height: 258px; margin: 0 121.7px 0 92.5px; }
.chevron { width: 26px; height: 43px; margin-top: 118.6px; fill: none; stroke: #000; stroke-width: 5.5px; stroke-linecap: round; stroke-linejoin: round; }
.carousel { padding-left: 82px; }
.dashboard .meta { padding-left: 200px; }
.dashboard .reactions { margin: 12px 347px 0 0; }
.details { margin-left: 493.4px; font-size: 21px; line-height: 26.5px; }

/* View */
.view .page { height: 1133.7px; padding: 95.9px 0 0 171.7px; grid-template-rows: 29.1px 294.2px 70px 38.9px 101.5px 31.6px 255.1px 32.4px 40.7px 19px auto; }
.actions { display: flex; flex-direction: column; margin: 104px 0 0 37px; font-size: 21px; line-height: 24px; gap: 17.6px; }
.actions .link:first-child { margin-left: 13px; }
.view .reactions { margin: 12.4px 348.7px 0 0; }
.scribbles { display: flex; flex-direction: column; gap: 4.8px; }
.scribbles svg, .description svg { width: 656px; height: 19px; }
.view .info-title { margin-left: 41px; }
.info { display: grid; align-items: start; font-size: 17.6px; line-height: 22.5px; }
.view .info { margin-left: 23.6px; grid-template-columns: 241.2px 218.5px 140px; grid-template-rows: 29.5px 55.9px 28.5px 53.9px 36.6px auto; }
.view .info > :nth-child(3n) { margin-top: 2px; }
.view .info > :nth-child(15) { margin-top: -3px; }
.view .info > :nth-child(18) { margin-top: -5px; }
.view .info > :nth-child(6n + 1) { margin-left: 17.4px; }
.view .info > :nth-child(6n + 2) { margin-left: 23.5px; }
.view .info > span:nth-child(3n + 1) { margin-left: 26px; }
.view .info > span:nth-child(10) { margin-left: 31px; }
.view .info > span:nth-child(3n + 2) { margin-left: 32.5px; }
.view .info > span:nth-child(3n) { margin-left: 12.5px; }
.view .info > :nth-child(13), .view .info > :nth-child(14) { margin-left: 0; }
.view .info > span:nth-child(16), .view .info > span:nth-child(17) { margin-left: 15px; }
.comments-title { margin-left: 15px; }
.comment { font-size: 16.4px; line-height: 19.3px; margin-left: 79px; padding-top: 1px; }
.leave { margin-left: 371px; font-size: 17.6px; }
.view .page > .input { width: 423.5px; height: 42px; margin-left: 82.7px; }

/* New */
.new .page { height: 1127.7px; padding: 23.4px 0 0 208.4px; grid-template-rows: 75.6px 29.2px 40.6px 292.8px 68.5px 30.1px 124.4px 34.8px 283.1px auto; }
.new .heading { margin-left: 186px; letter-spacing: .1px; }
.new .title-input { width: 221px; height: 42px; }
.new .picture { height: 295px; width: 714px; margin-left: 3.8px; }
.upload { position: relative; display: grid; justify-items: center; padding-top: 111px; gap: 43.5px; }
.upload-icon { width: 71px; height: 68px; }
.upload .label { margin-right: 9px; }
.new .user-row { padding-left: 249.6px; }
.new .user-row .label { margin-top: 8.5px; width: 237.5px; letter-spacing: .15px; }
.new .user-row .input { width: 222px; height: 41px; }
.description-label { margin-left: 3.8px; }
.new .textarea { width: 574px; height: 114px; }
.new .info-title { margin-left: 6.9px; }
.new .info { grid-template-columns: 249.6px 242px 130px; grid-template-rows: 21.8px 64.6px 20.8px 56.4px 26px auto; }
.info .input { width: 122px; height: 41px; }
.new .info b { margin-left: 6.5px; }
.new .info b:nth-child(14) { margin-left: 0; }
.new .info b:nth-child(3n) { margin-left: 3px; }
.new .info .input:nth-child(5), .new .info .input:nth-child(6) { margin-top: 4px; }
.new .button { width: 100.5px; height: 38.5px; line-height: 28px; margin-left: 516.6px; }

/* Edit */
.edit .page { height: 1106.3px; padding: 20.7px 0 0 209.7px; grid-template-rows: 28.1px 44.7px 291.8px 41px 31.2px 116.2px 33.6px 265px auto; }
.edit .title-label { margin-left: 10px; }
.edit .title-input { width: 121.7px; height: 41.7px; margin-left: 10px; padding-left: 1px; font-size: 20.8px; line-height: 33px; }
.edit .picture { width: 716px; height: 291px; }
.edit .user-row { padding-left: 304.8px; }
.edit .user-row .label { width: 239.7px; letter-spacing: .15px; }
.edit .user-row .input { width: 171px; height: 42px; font-size: 21.3px; line-height: 33px; padding-left: 58px; }
.edit .description { width: 687px; height: 94.6px; margin-left: 7.7px; padding: 12px 0 0 6px; }
.edit .description svg { margin-bottom: 5.2px; }
.edit .description svg + svg { margin-bottom: 10.7px; }
.edit .info-title { margin-left: 17.6px; }
.edit .info { margin-left: 13px; grid-template-columns: 247.3px 242.8px 130px; grid-template-rows: 16.8px 68.7px 16.8px 59.5px 29px auto; }
.edit .info b { margin-left: 5px; }
.edit .info b:nth-child(14) { margin-left: 0; }
.edit .info .input { line-height: 36px; padding-left: 12px; }
.edit .info .input:nth-child(4) { padding-left: 8px; }
.edit .info .input:nth-child(10), .edit .info .input:nth-child(16) { padding-left: 14.5px; }
.edit .info .input:nth-child(n + 16) { line-height: 29px; }
.edit .info .input:nth-child(17) { width: 141px; }
.edit .button { width: 105px; height: 38.7px; line-height: 28px; margin-left: 538.3px; }

/* Q & A */
.qa .page { height: 773px; padding: 49.2px 0 0 122.4px; grid-template-rows: 111.5px 32.4px 31.2px 52px 44px 42px 55px 55.3px auto; }
.qa .heading { margin-left: -77px; }
.qa .question { margin-left: 1.5px; }
.qa .input { width: 578px; height: 41px; font-size: 20.8px; line-height: 32px; padding-left: 8px; }
.qa .button { width: 100px; height: 40px; line-height: 30px; margin-left: 475px; }
.rule { width: 580px; height: 8px; fill: none; stroke: #000; stroke-width: 3px; }

/* Contact */
.contact .page { height: 826.1px; }
.contact-info { width: 762.3px; padding: 18.3px 0 0 122px; display: grid; align-items: start; justify-items: start; grid-template-rows: 76.6px 40.3px 48.3px 91.9px 41.4px auto; }
.contact-info .heading { margin-left: -76px; letter-spacing: .1px; }
.contact-row { display: flex; gap: 29px; font-size: 21.3px; line-height: 25.3px; }
.contact-row .link, .contact-row span { padding-top: 1.5px; }
.contact-row svg { width: 39px; height: 40px; }
.city { font-size: 25.4px; line-height: 32px; }
.map { width: 392px; height: 298px; }
.contact .form { padding-top: 113.8px; grid-template-rows: 55.6px 19.2px 45.7px 23.9px 51.2px 25.6px 200.8px auto; }
.contact .input { width: 303.5px; height: 42px; }
.contact .textarea { height: 187px; }
.contact .button { width: 151px; height: 36px; line-height: 26px; margin-left: 148px; }

/* Sticky notes */
.note { position: absolute; }
.paper { position: absolute; inset: 0; width: 100%; height: 100%; }
.tape { position: absolute; top: -22.5px; left: 50%; width: max(70px, 24%); height: 40px; transform: translateX(-50%); }
.note-text { position: relative; height: 100%; overflow: hidden; padding: 22.3px 0 0 15px; font-size: 21.3px; line-height: 24.8px; }
.note ul { list-style: none; padding-left: 49.4px; }
.note li { position: relative; }
.note li::before { content: ""; position: absolute; left: -22px; top: 11px; width: 4px; height: 4px; border-radius: 50%; background: #000; }
.note .centered { text-align: center; padding-left: 32px; }
.note .centered li::before { display: none; }
.centered span { position: relative; }
.centered span::before { content: ""; position: absolute; left: -22px; top: 11px; width: 4px; height: 4px; border-radius: 50%; background: #000; }
.login .note { left: 539.7px; top: 398px; width: 266.3px; height: 195.4px; }
.registration .note { left: 650.7px; top: 607.6px; width: 417.5px; height: 173.7px; }
.note-menu { left: 714.7px; top: 201px; width: 341px; height: 169.3px; }
.note-posts { left: 150.4px; top: 694.5px; width: 337px; height: 149.5px; }
.note-angle { left: 815px; top: 680px; width: 272px; height: 138.7px; }
.note-links { left: 802.2px; top: 533.8px; width: 316.5px; height: 214.5px; }
.note-likes { left: 719.5px; top: 795px; width: 348.3px; height: 208.5px; }
.new .note { left: 825.2px; top: 1009.6px; width: 289px; height: 223.7px; }
.note-same { left: 956.4px; top: 822.7px; width: 168.5px; height: 159.6px; }
.note-footer { left: 37.4px; top: 1096px; width: 541.4px; height: 239px; }
.note-same .note-text, .note-footer .note-text { padding-left: 0; text-align: center; }
.note-footer .note-text { height: 242px; }
.qa .note { left: 778.7px; top: 467.5px; width: 262.5px; height: 167px; }
.contact .note { left: 556.7px; top: 758.6px; width: 263.3px; height: 143px; }

/* Arrows over the canvas */
.arrows { position: absolute; left: 0; top: 0; width: 3699px; height: 4096px; }
.arrow-lines path { fill: none; stroke: #000; stroke-width: 6.8px; marker-start: url(#head); marker-end: url(#head); }
```
